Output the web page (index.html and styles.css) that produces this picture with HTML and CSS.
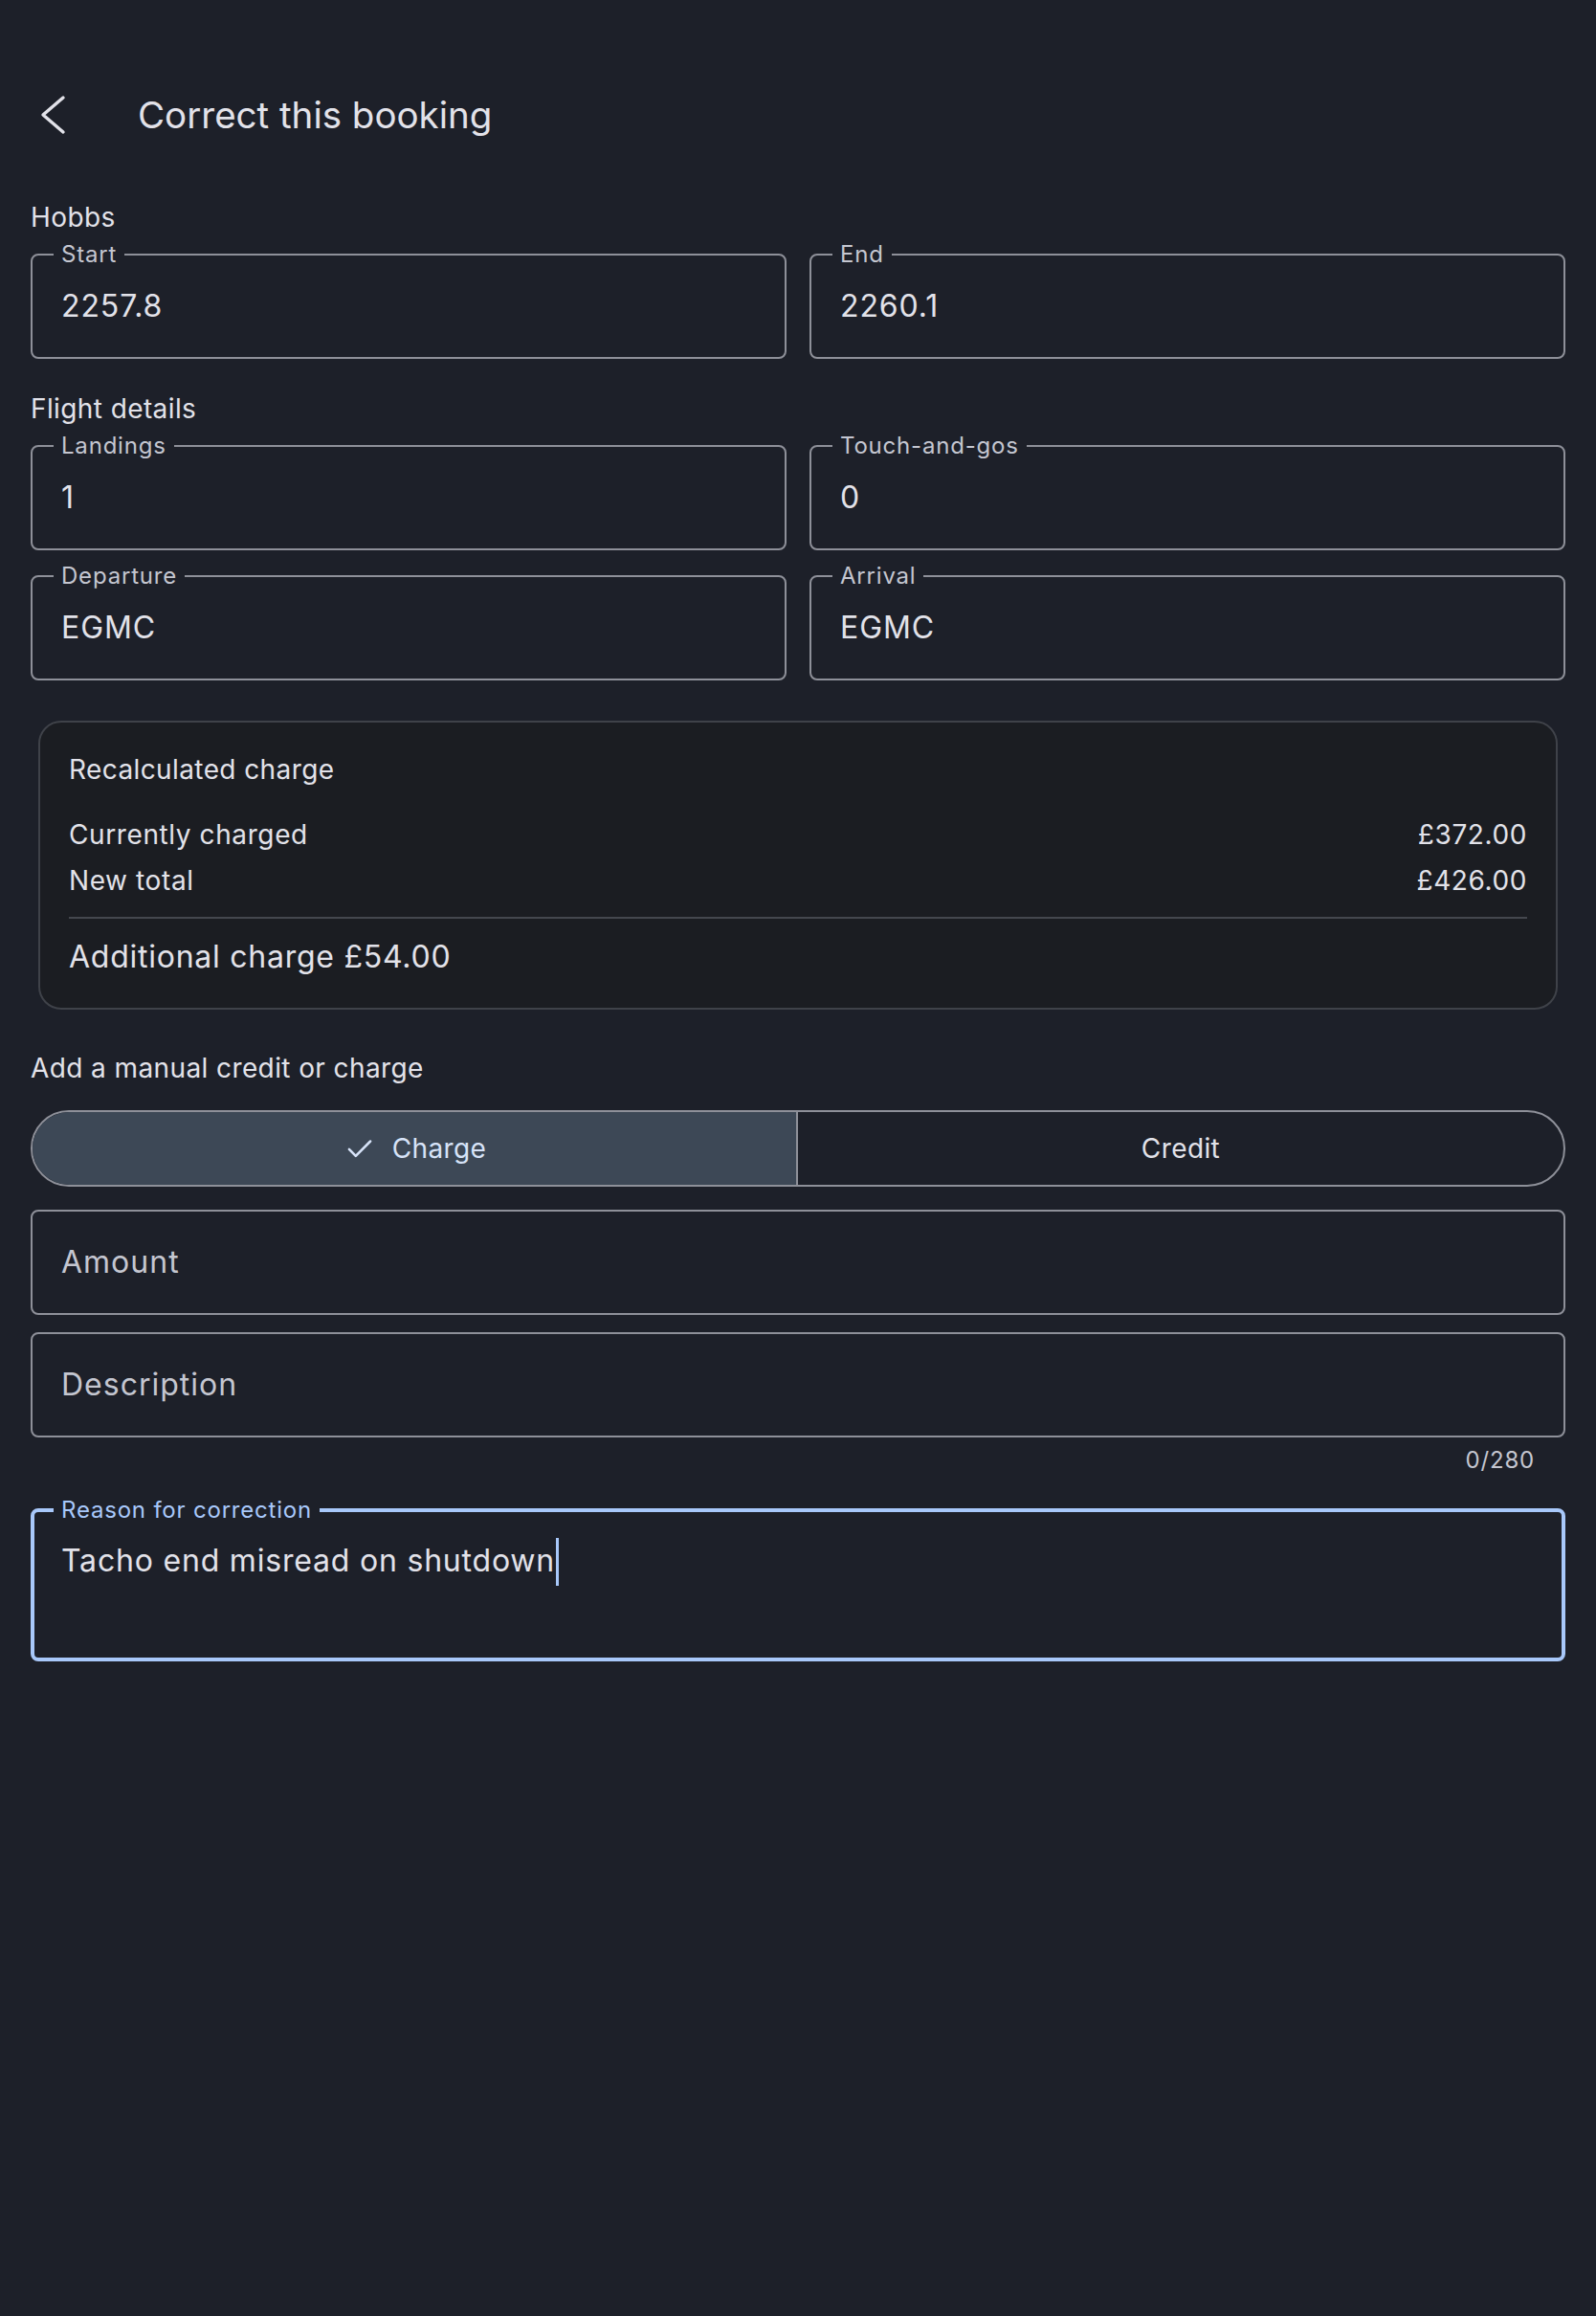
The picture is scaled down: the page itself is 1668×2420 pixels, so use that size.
FILE: index.html
```html
<!DOCTYPE html>
<html lang="en">
<head>
<meta charset="UTF-8">
<meta name="viewport" content="width=device-width, initial-scale=1.0">
<title>Correct this booking</title>
<link rel="stylesheet" href="styles.css">
</head>
<body>

<header class="app-bar">
  <button class="back-btn" aria-label="Back">
    <svg width="48" height="48" viewBox="0 0 48 48">
      <polyline points="34,6 13,24 34,42" fill="none" stroke="#e2e2e9" stroke-width="3.4" stroke-linecap="round" stroke-linejoin="round"/>
    </svg>
  </button>
  <h1 class="app-title">Correct this booking</h1>
</header>

<main class="form">
  <h2 class="section-label">Hobbs</h2>
  <div class="field-grid">
    <div class="field">
      <span class="field-label">Start</span>
      <span class="field-value">2257.8</span>
    </div>
    <div class="field">
      <span class="field-label">End</span>
      <span class="field-value">2260.1</span>
    </div>
  </div>

  <h2 class="section-label">Flight details</h2>
  <div class="field-grid">
    <div class="field">
      <span class="field-label">Landings</span>
      <span class="field-value">1</span>
    </div>
    <div class="field">
      <span class="field-label">Touch-and-gos</span>
      <span class="field-value">0</span>
    </div>
    <div class="field">
      <span class="field-label">Departure</span>
      <span class="field-value">EGMC</span>
    </div>
    <div class="field">
      <span class="field-label">Arrival</span>
      <span class="field-value">EGMC</span>
    </div>
  </div>

  <section class="charge-card">
    <div class="card-title">Recalculated charge</div>
    <div class="charge-row">
      <span>Currently charged</span>
      <span>£372.00</span>
    </div>
    <div class="charge-row">
      <span>New total</span>
      <span>£426.00</span>
    </div>
    <div class="divider"></div>
    <div class="charge-total">Additional charge £54.00</div>
  </section>

  <h2 class="section-label manual-label">Add a manual credit or charge</h2>
  <div class="segmented">
    <button class="segment selected">
      <svg width="36" height="36" viewBox="0 0 24 24">
        <polyline points="4.6,12.6 9.2,17.2 19.4,7" fill="none" stroke="#d7e3f8" stroke-width="1.7" stroke-linecap="round" stroke-linejoin="round"/>
      </svg>
      <span>Charge</span>
    </button>
    <button class="segment">
      <span>Credit</span>
    </button>
  </div>

  <div class="field field-single">
    <span class="field-placeholder">Amount</span>
  </div>
  <div class="field field-single field-description">
    <span class="field-placeholder">Description</span>
  </div>
  <div class="counter">0/280</div>

  <div class="field field-focused">
    <span class="field-label">Reason for correction</span>
    <span class="field-value reason-text">Tacho end misread on shutdown<span class="cursor"></span></span>
  </div>
</main>

</body>
</html>
```

FILE: styles.css
```css
body {
  margin: 0;
  background-color: #1d2029;
  color: #e2e2e9;
  font-family: Inter, "Noto Sans", sans-serif;
  width: 1668px;
  min-height: 2420px;
}
.app-bar {
  display: flex;
  align-items: center;
  height: 128px;
  margin-top: 56px;
  padding: 0 32px;
}
.back-btn {
  width: 48px;
  height: 48px;
  padding: 0;
  border: none;
  background: none;
  display: flex;
}
.app-title {
  margin: 0 0 0 64px;
  font-size: 38.5px;
  font-weight: 400;
  line-height: 56px;
  color: #e2e2e9;
}
.form {
  padding: 0 32px;
}
.section-label {
  margin: 32px 0 18px;
  font-size: 28px;
  font-weight: 400;
  line-height: 40px;
  letter-spacing: 0.4px;
  color: #e2e2e9;
}
.section-label:first-child {
  margin-top: 23px;
}
.field-grid {
  display: grid;
  grid-template-columns: 1fr 1fr;
  gap: 26px 24px;
}
.field {
  position: relative;
  box-sizing: border-box;
  height: 110px;
  display: flex;
  align-items: center;
  padding: 0 30px;
  border: 2px solid #8e9099;
  border-radius: 8px;
}
.field-label {
  position: absolute;
  top: -13px;
  left: 22px;
  padding: 0 8px;
  background-color: #1d2029;
  font-size: 24px;
  line-height: 24px;
  letter-spacing: 0.8px;
  color: #c4c6d0;
}
.field-value {
  font-size: 32px;
  line-height: 48px;
  letter-spacing: 0.9px;
  color: #e2e2e9;
}
.field-placeholder {
  font-size: 32px;
  line-height: 48px;
  letter-spacing: 1px;
  color: #c4c6d0;
}
.charge-card {
  margin: 42px 8px 0;
  padding: 29px 30px;
  background-color: #1b1d22;
  border: 2px solid #3f4249;
  border-radius: 24px;
}
.card-title {
  font-size: 28px;
  font-weight: 400;
  line-height: 40px;
  letter-spacing: 0.4px;
  margin-bottom: 28px;
}
.charge-row {
  display: flex;
  justify-content: space-between;
  font-size: 28px;
  line-height: 40px;
  letter-spacing: 0.6px;
}
.charge-row + .charge-row {
  margin-top: 8px;
}
.divider {
  height: 2px;
  background-color: #44474e;
  margin: 18px 0 16px;
}
.charge-total {
  font-size: 32px;
  font-weight: 400;
  line-height: 48px;
  letter-spacing: 0.75px;
}
.manual-label {
  margin-top: 41px;
  margin-bottom: 24px;
}
.segmented {
  display: grid;
  grid-template-columns: 1fr 1fr;
  box-sizing: border-box;
  height: 80px;
  border: 2px solid #8e9099;
  border-radius: 40px;
  overflow: hidden;
  margin-bottom: 24px;
}
.segment {
  display: flex;
  align-items: center;
  justify-content: center;
  gap: 16px;
  border: none;
  background: none;
  padding: 0;
  font-family: Inter, "Noto Sans", sans-serif;
  font-size: 28px;
  font-weight: 400;
  letter-spacing: 0.4px;
  color: #e2e2e9;
}
.segment.selected {
  background-color: #3d4856;
  border-right: 2px solid #8e9099;
  color: #d7e3f8;
}
.field-description {
  margin-top: 18px;
}
.counter {
  margin-top: 8px;
  padding-right: 32px;
  text-align: right;
  font-size: 24px;
  line-height: 32px;
  letter-spacing: 0.8px;
  color: #c4c6d0;
}
.field-focused {
  height: 160px;
  margin-top: 34px;
  align-items: flex-start;
  padding: 27px 28px;
  border: 4px solid #a8c8fa;
}
.field-focused .field-label {
  top: -14px;
  left: 20px;
  color: #a8c8fa;
}
.reason-text {
  letter-spacing: 0.8px;
}
.cursor {
  display: inline-block;
  width: 3px;
  height: 50px;
  margin-left: 1px;
  vertical-align: top;
  background-color: #a8c8fa;
}
```
